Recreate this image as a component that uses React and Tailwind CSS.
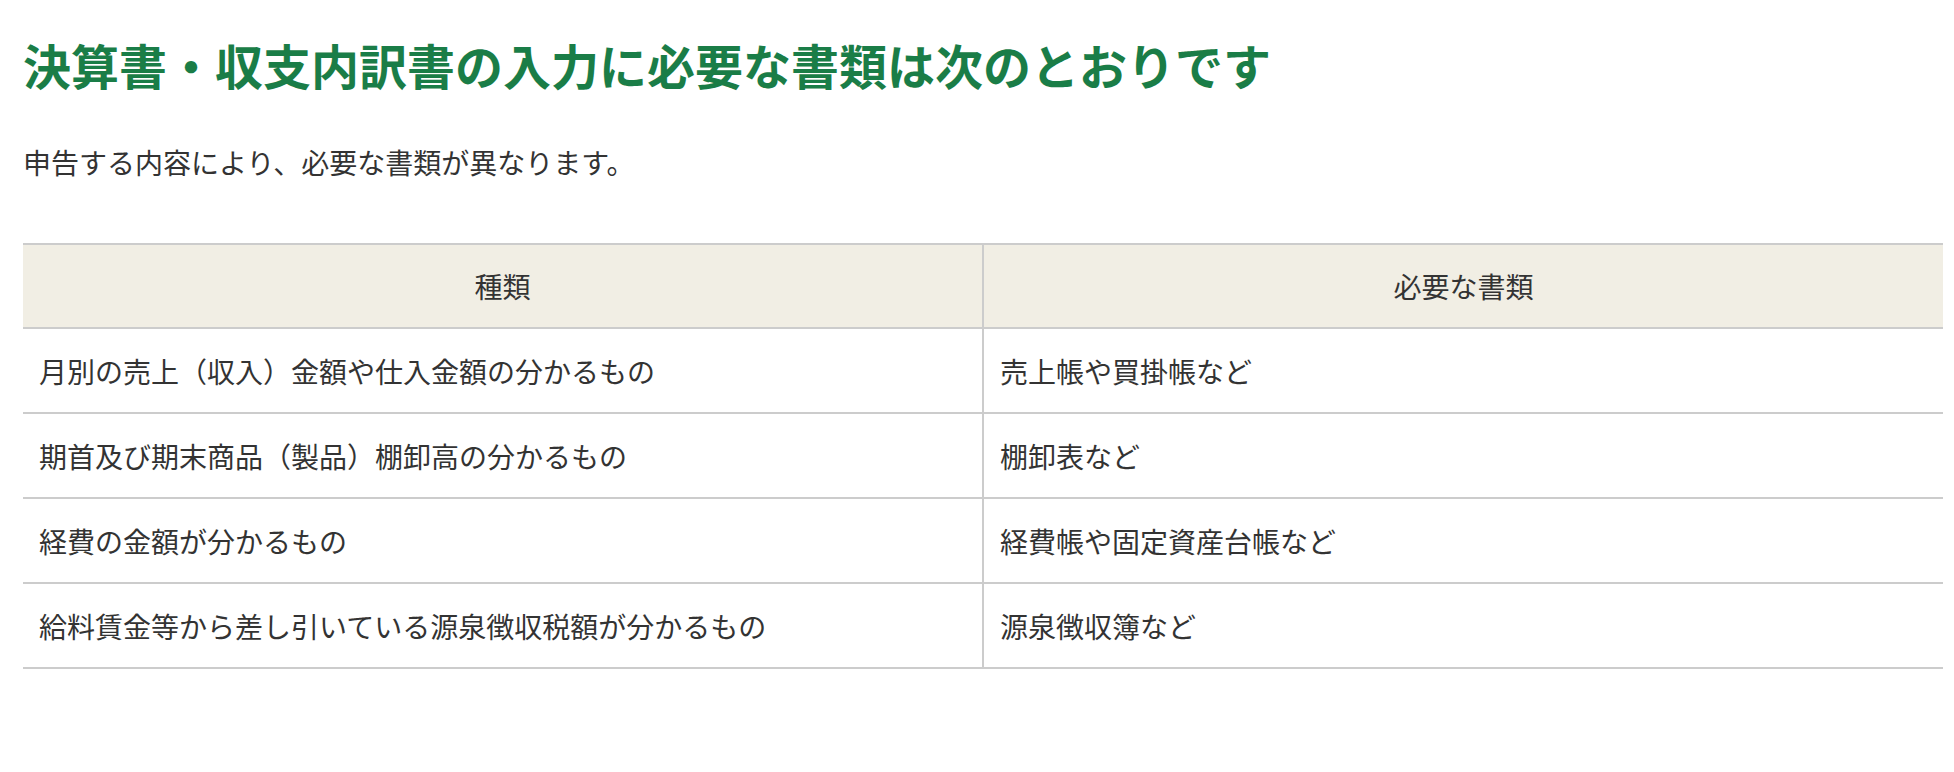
export default function App() {
  const rows = [
    ["月別の売上（収入）金額や仕入金額の分かるもの", "売上帳や買掛帳など"],
    ["期首及び期末商品（製品）棚卸高の分かるもの", "棚卸表など"],
    ["経費の金額が分かるもの", "経費帳や固定資産台帳など"],
    ["給料賃金等から差し引いている源泉徴収税額が分かるもの", "源泉徴収簿など"],
  ];
  const font = { fontFamily: '"Noto Sans CJK JP", "Noto Sans", sans-serif' };
  return (
    <div className="min-h-[772px] bg-white text-[#333333]" style={font}>
      <div className="ml-[23px] w-[1920px] pt-[28px]">
        <h1 className="text-[48px] font-bold leading-[72px] text-[#1a7d47]">
          決算書・収支内訳書の入力に必要な書類は次のとおりです
        </h1>
        <p className="mt-[41px] text-[28px] leading-[42px]">
          申告する内容により、必要な書類が異なります。
        </p>
        <div className="mt-[60px] border-t-2 border-[#cccccc]">
          <div className="flex h-[84px] border-b-2 border-[#cccccc] bg-[#f1eee4] text-[28px]">
            <div className="flex w-[961px] items-center justify-center border-r-2 border-[#cccccc]">種類</div>
            <div className="flex flex-1 items-center justify-center">必要な書類</div>
          </div>
          {rows.map(([a, b]) => (
            <div key={a} className="flex h-[85px] border-b-2 border-[#cccccc] text-[28px]">
              <div className="flex w-[961px] items-center border-r-2 border-[#cccccc] px-[16px]">{a}</div>
              <div className="flex flex-1 items-center px-[16px]">{b}</div>
            </div>
          ))}
        </div>
      </div>
    </div>
  );
}
